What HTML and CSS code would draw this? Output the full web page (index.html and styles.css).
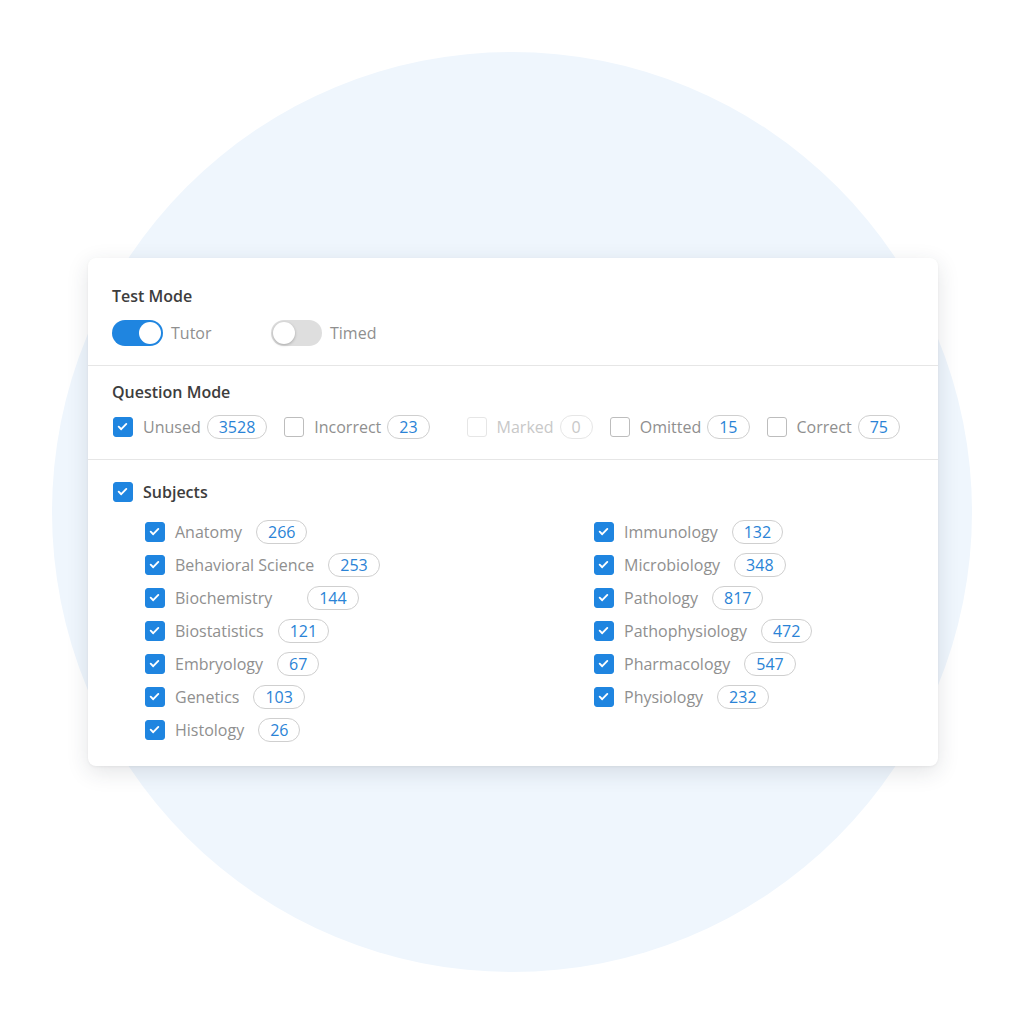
FILE: index.html
```html
<!DOCTYPE html>
<html lang="en">
<head>
    <meta charset="UTF-8">
    <title>Create Test</title>
    <link rel="stylesheet" href="styles.css">
</head>
<body>

<div class="stage">
    <div class="circle"></div>

    <div class="card">

        <div class="section mode-section">
            <h3>Test Mode</h3>
            <div class="toggle-row">
                <label class="toggle-item">
                    <span class="toggle on"><span class="knob"></span></span>
                    <span class="label">Tutor</span>
                </label>
                <label class="toggle-item">
                    <span class="toggle"><span class="knob"></span></span>
                    <span class="label">Timed</span>
                </label>
            </div>
        </div>

        <div class="section question-section">
            <h3>Question Mode</h3>
            <div class="question-row">
                <div class="check-item">
                    <span class="box checked"><svg viewBox="0 0 20 20"><path d="M5.5 10.2l3 3 6-6.2"/></svg></span>
                    <span class="label">Unused</span>
                    <span class="pill">3528</span>
                </div>
                <div class="check-item">
                    <span class="box"></span>
                    <span class="label">Incorrect</span>
                    <span class="pill">23</span>
                </div>
                <div class="check-item disabled marked">
                    <span class="box"></span>
                    <span class="label">Marked</span>
                    <span class="pill">0</span>
                </div>
                <div class="check-item">
                    <span class="box"></span>
                    <span class="label">Omitted</span>
                    <span class="pill">15</span>
                </div>
                <div class="check-item">
                    <span class="box"></span>
                    <span class="label">Correct</span>
                    <span class="pill">75</span>
                </div>
            </div>
        </div>

        <div class="section subjects-section">
            <div class="check-item subjects-head">
                <span class="box checked"><svg viewBox="0 0 20 20"><path d="M5.5 10.2l3 3 6-6.2"/></svg></span>
                <span class="title">Subjects</span>
            </div>
            <div class="subject-grid" id="subjects"></div>
        </div>

    </div>
</div>

<script>
    const subjects = [
        ["Anatomy", 266], ["Immunology", 132],
        ["Behavioral Science", 253], ["Microbiology", 348],
        ["Biochemistry", 144, "wide"], ["Pathology", 817],
        ["Biostatistics", 121], ["Pathophysiology", 472],
        ["Embryology", 67], ["Pharmacology", 547],
        ["Genetics", 103], ["Physiology", 232],
        ["Histology", 26]
    ];

    const grid = document.getElementById("subjects");
    subjects.forEach(s => {
        grid.innerHTML += `
            <div class="check-item subject">
                <span class="box checked"><svg viewBox="0 0 20 20"><path d="M5.5 10.2l3 3 6-6.2"/></svg></span>
                <span class="label">${s[0]}</span>
                <span class="pill ${s[2] || ""}">${s[1]}</span>
            </div>
        `;
    });
</script>

</body>
</html>
```

FILE: styles.css
```css
* {
    box-sizing: border-box;
}

body {
    margin: 0;
    font-family: "Open Sans", "Noto Sans", Arial, sans-serif;
    background: #ffffff;
}

.stage {
    width: 1024px;
    height: 1024px;
    display: grid;
    overflow: hidden;
}

.circle {
    grid-area: 1 / 1;
    place-self: center;
    width: 920px;
    height: 920px;
    border-radius: 50%;
    background: #eff6fd;
}

.card {
    grid-area: 1 / 1;
    align-self: start;
    justify-self: start;
    margin: 258px 0 0 88px;
    width: 850px;
    height: 508px;
    background: #fff;
    border-radius: 8px;
    box-shadow: 0 6px 22px rgba(40, 50, 60, 0.13), 0 1px 3px rgba(0, 0, 0, 0.05);
}

.section {
    padding: 0 24px;
    border-bottom: 1px solid #e6e6e6;
}

.section:last-child {
    border-bottom: none;
}

h3 {
    margin: 0;
    font-size: 16px;
    line-height: 20px;
    font-weight: 600;
    color: #3d3d3d;
}

.label {
    font-size: 16px;
    color: #8f8f8f;
    line-height: 24px;
}

/* test mode */
.mode-section {
    height: 108px;
    padding-top: 28px;
}

.toggle-row {
    display: flex;
    margin-top: 14px;
}

.toggle-item {
    display: flex;
    align-items: center;
    gap: 8px;
    width: 159px;
}

.toggle {
    width: 51px;
    height: 26px;
    border-radius: 13px;
    background: #dedede;
    padding: 2px;
    display: flex;
}

.toggle .knob {
    width: 22px;
    height: 22px;
    border-radius: 50%;
    background: #fff;
    box-shadow: 0 1px 3px rgba(0, 0, 0, 0.25);
}

.toggle.on {
    background: #1f85e0;
    justify-content: flex-end;
}

.toggle.on .knob {
    box-shadow: none;
}

/* question mode */
.question-section {
    height: 94px;
    padding-top: 16px;
}

.question-row {
    display: flex;
    gap: 16px;
    margin-top: 13px;
}

.check-item {
    display: flex;
    align-items: center;
    height: 24px;
}

.check-item.marked {
    margin-left: 20px;
}

.box {
    width: 20px;
    height: 20px;
    border-radius: 3px;
    border: 1.5px solid #bdbdbd;
    margin: 0 10px 0 1px;
    display: flex;
    flex-shrink: 0;
}

.box.checked {
    background: #1f85e0;
    border-color: #1f85e0;
}

.box svg {
    width: 17px;
    height: 17px;
    fill: none;
    stroke: #fff;
    stroke-width: 2.2;
    stroke-linecap: round;
    stroke-linejoin: round;
}

.pill {
    height: 24px;
    line-height: 22px;
    padding: 0 11px;
    margin-left: 6px;
    border: 1px solid #cfcfcf;
    border-radius: 12px;
    font-size: 16px;
    color: #2a83d6;
}

.check-item.disabled .box {
    border-color: #e6e6e6;
}

.check-item.disabled .label {
    color: #c8c8c8;
}

.check-item.disabled .pill {
    color: #c8c8c8;
    border-color: #e6e6e6;
}

/* subjects */
.subjects-section {
    padding-top: 20px;
}

.subjects-head .title {
    font-size: 16px;
    font-weight: 600;
    color: #3d3d3d;
}

.subject-grid {
    display: grid;
    grid-template-columns: 449px 1fr;
    row-gap: 9px;
    margin-top: 16px;
    padding-left: 32px;
}

.subject .pill {
    margin-left: 14px;
}

.subject .pill.wide {
    margin-left: 35px;
}
```
